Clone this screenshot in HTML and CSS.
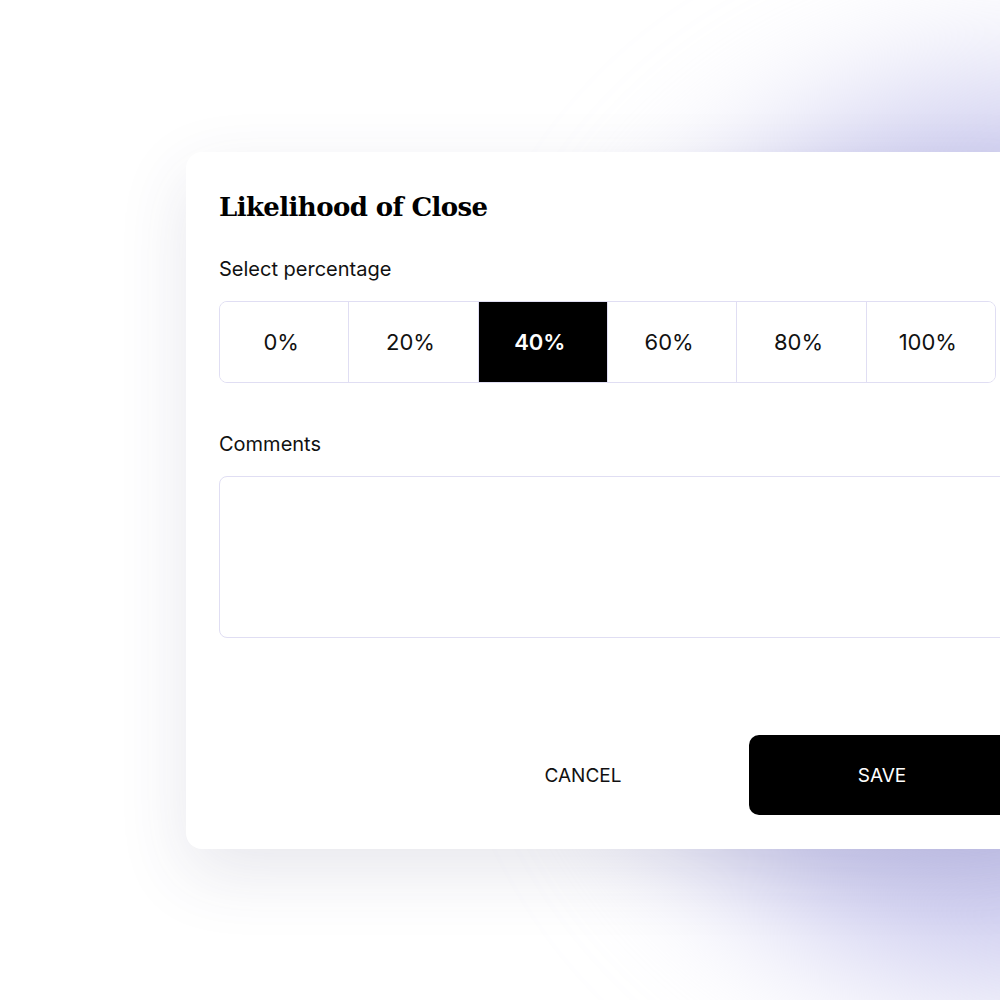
FILE: index.html
```html
<!DOCTYPE html>
<html lang="en">
<head>
 <title>Likelihood of Close</title>
 <link rel="stylesheet" href="styles.css">
</head>
<body>

 <div class="glow"></div>

 <div class="page">
 <div class="dialog">
 <h2 class="dialog-title">Likelihood of Close</h2>

 <label class="field-label">Select percentage</label>
 <div class="segments">
 <button class="segment">0%</button>
 <button class="segment">20%</button>
 <button class="segment selected">40%</button>
 <button class="segment">60%</button>
 <button class="segment">80%</button>
 <button class="segment">100%</button>
 </div>

 <label class="field-label comments-label" for="comments">Comments</label>
 <textarea id="comments" class="comments"></textarea>

 <div class="actions">
 <button class="cancel-btn">CANCEL</button>
 <button class="save-btn">SAVE</button>
 </div>
 </div>
 </div>

</body>
</html>
```

FILE: styles.css
```css
 html, body {
 margin: 0;
 padding: 0;
 overflow: hidden;
 }

 body {
 font-family: Inter, "Noto Sans", sans-serif;
 background: #ffffff;
 color: #111111;
 width: 1000px;
 height: 1000px;
 position: relative;
 }

 /* lavender blur sitting behind the dialog */
 .glow {
 position: absolute;
 left: 600px;
 top: 85px;
 width: 840px;
 height: 900px;
 border-radius: 50%;
 background: #c9c8ee;
 filter: blur(75px);
 }

 .page {
 position: relative;
 padding: 152px 0 0 186px;
 }

 .dialog {
 width: 862px;
 box-sizing: border-box;
 padding: 37px 33px 34px;
 background: #ffffff;
 border-radius: 16px;
 box-shadow: 0 24px 70px rgba(60, 60, 110, 0.12);
 }

 .dialog-title {
 font-family: "Roboto Slab", "DejaVu Serif", serif;
 font-weight: bold;
 font-size: 26px;
 line-height: 36px;
 letter-spacing: -0.6px;
 margin: 0 0 32px;
 color: #000000;
 }

 .field-label {
 display: block;
 font-size: 20px;
 line-height: 24px;
 color: #111111;
 margin-bottom: 20px;
 }

 .segments {
 display: flex;
 width: 777px;
 height: 82px;
 border: 1px solid #e0def3;
 border-radius: 8px;
 box-sizing: border-box;
 overflow: hidden;
 }

 .segment {
 flex: 1;
 border: none;
 border-left: 1px solid #e0def3;
 background: #ffffff;
 font-family: Inter, "Noto Sans", sans-serif;
 font-size: 22px;
 color: #111111;
 padding: 0 6px 0 0;
 cursor: pointer;
 }

 .segment:first-child {
 border-left: none;
 }

 .segment.selected {
 background: #000000;
 color: #ffffff;
 font-weight: 600;
 }

 .comments-label {
 margin-top: 49px;
 }

 .comments {
 display: block;
 width: 100%;
 height: 162px;
 box-sizing: border-box;
 border: 1px solid #e0def3;
 border-radius: 8px;
 resize: none;
 font-family: inherit;
 }

 .actions {
 display: flex;
 justify-content: flex-end;
 gap: 33px;
 margin-top: 97px;
 }

 .actions button {
 width: 266px;
 height: 80px;
 border: none;
 border-radius: 10px;
 font-family: Inter, "Noto Sans", sans-serif;
 font-size: 19px;
 cursor: pointer;
 }

 .cancel-btn {
 background: transparent;
 color: #111111;
 }

 .save-btn {
 background: #000000;
 color: #ffffff;
 }
```
